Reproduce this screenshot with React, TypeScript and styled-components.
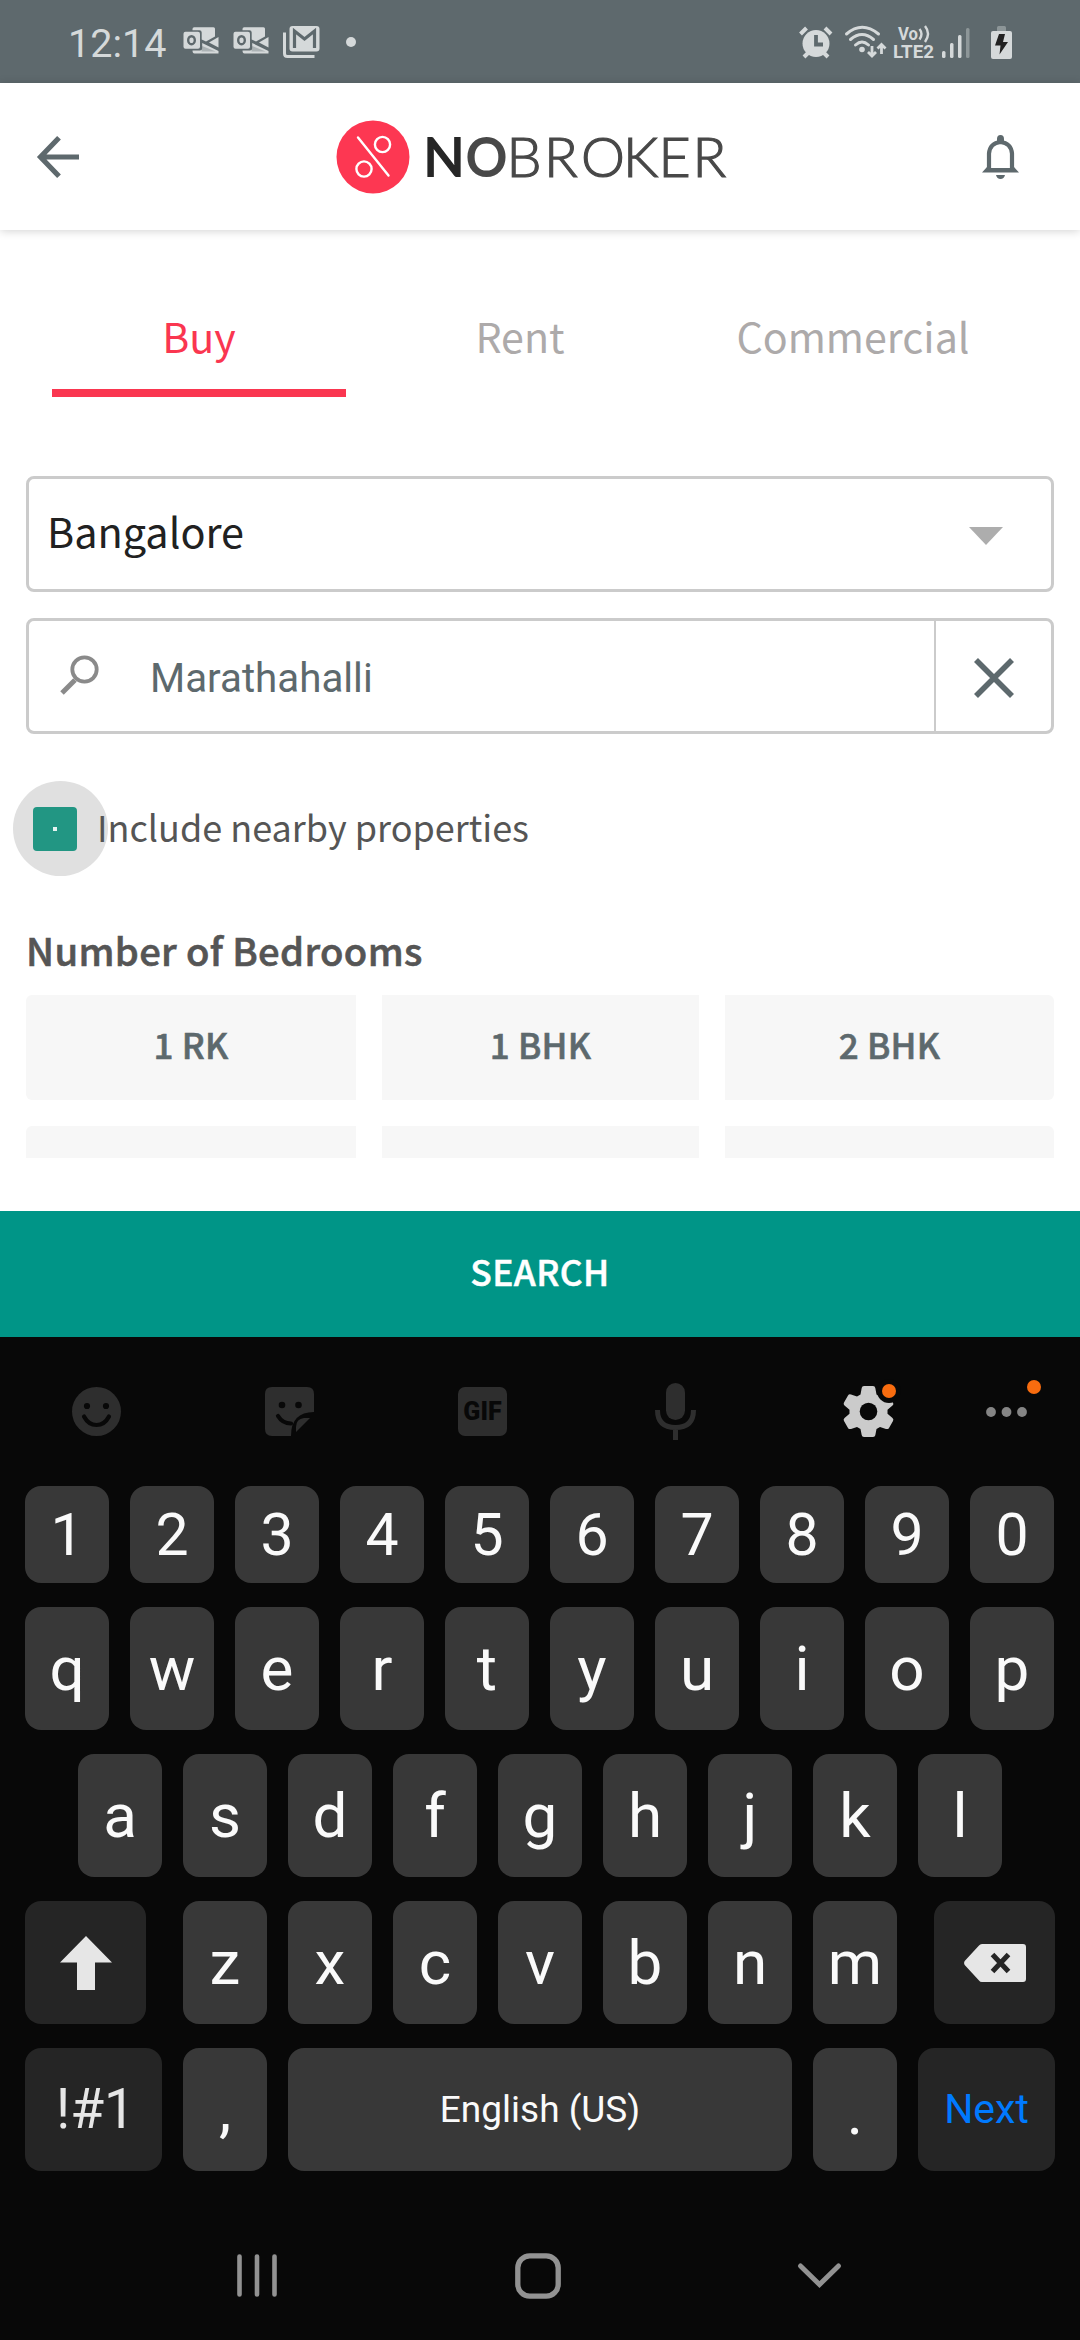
import React from "react";
import styled, { createGlobalStyle } from "styled-components";

const sans = `"Noto Sans CJK SC", "Noto Sans", sans-serif`;
const roboto = `Roboto, "Liberation Sans", sans-serif`;

const Global = createGlobalStyle`
  *, *::before, *::after { box-sizing: border-box; }
  body { margin: 0; background: #fff; }
  button { border: 0; padding: 0; margin: 0; background: none; font: inherit; color: inherit; }
  svg { display: block; flex: none; overflow: visible; }
`;

const Screen = styled.div`
  width: 1080px;
  height: 2340px;
  display: flex;
  flex-direction: column;
  overflow: hidden;
  background: #fff;
  font-family: ${sans};
`;

const StatusBar = styled.div`
  height: 83px;
  flex: none;
  display: flex;
  align-items: center;
  justify-content: space-between;
  padding: 0 67px 0 68px;
  background: #5e696d;
  color: #d5d9da;
  font-family: ${roboto};
`;
const StatusGroup = styled.div`
  display: flex;
  align-items: center;
`;
const Clock = styled.div`
  width: 115px;
  font-size: 39.5px;
  line-height: 46px;
  padding-top: 4px;
`;

const Header = styled.header`
  height: 147px;
  flex: none;
  display: flex;
  align-items: center;
  justify-content: space-between;
  padding: 0 61px 0 37px;
  background: #fff;
  box-shadow: 0 1px 9px rgba(0, 0, 0, 0.18);
`;
const Brand = styled.div`
  display: flex;
  align-items: center;
  padding-left: 3px;
`;
const Wordmark = styled.div`
  width: 304px;
  margin-left: 14px;
  display: flex;
  align-items: center;
`;

const Form = styled.main`
  height: 981px;
  flex: none;
  display: flex;
  flex-direction: column;
  padding: 0 26px;
`;

const Tabs = styled.nav`
  height: 167px;
  display: grid;
  grid-template-columns: 294px 348px 318px;
  padding: 0 26px;
`;
const Tab = styled.button<{ $active?: boolean }>`
  border-bottom: 8px solid ${(p) => (p.$active ? "#fa3650" : "transparent")};
  color: ${(p) => (p.$active ? "#fa3650" : "#adaaaa")};
  font-size: 41.2px;
  line-height: 60px;
  padding-top: 50px;
`;

const Field = styled.div`
  height: 116px;
  flex: none;
  display: flex;
  align-items: stretch;
  border: 3px solid #cbcbcb;
  border-radius: 8px;
`;
const CityField = styled(Field)`
  margin-top: 79px;
  padding: 0 48px 0 18px;
  align-items: center;
  justify-content: space-between;
`;
const CityName = styled.span`
  padding-bottom: 8px;
  color: #212121;
  font-size: 41.4px;
  line-height: 60px;
`;
const CityCaret = styled.svg`
  margin-top: 4px;
`;
const SearchField = styled(Field)`
  margin-top: 26px;
`;
const SearchEntry = styled.div`
  flex: 1;
  display: flex;
  align-items: center;
  padding-left: 31px;
  gap: 50px;
`;
const SearchText = styled.span`
  padding-top: 5px;
  color: #5d696d;
  font: 40.3px/48px ${roboto};
`;
const ClearButton = styled.button`
  width: 117px;
  display: flex;
  align-items: center;
  justify-content: center;
  padding-top: 4px;
  border-left: 2px solid #cbcbcb;
`;

const CheckRow = styled.label`
  position: relative;
  height: 95px;
  flex: none;
  margin-top: 47px;
  display: flex;
  align-items: center;
  gap: 20px;
  padding-left: 7px;
  color: #555;
  font-size: 36px;
  line-height: 52px;
  &::before {
    content: "";
    position: absolute;
    left: -13px;
    top: 0;
    width: 95px;
    height: 95px;
    border-radius: 50%;
    background: #e0e0e0;
  }
`;
const CheckBox = styled.span`
  position: relative;
  width: 44px;
  height: 44px;
  display: flex;
  align-items: center;
  justify-content: center;
  border-radius: 4px;
  background: #229683;
  &::after {
    content: "";
    width: 4px;
    height: 4px;
    background: #e6f3f1;
  }
`;
const CheckText = styled.span`
  position: relative;
  padding-bottom: 5px;
`;

const SectionTitle = styled.h2`
  margin: 46px 0 0;
  color: #555;
  font-size: 38.2px;
  line-height: 56px;
  font-weight: 500;
  letter-spacing: 0.35px;
  -webkit-text-stroke: 0.6px #555;
`;

const ChipGrid = styled.div`
  height: 163px;
  flex: none;
  margin-top: 17px;
  display: grid;
  grid-template-columns: 330px 317px 329px;
  grid-auto-rows: 105px;
  gap: 26px;
  overflow: hidden;
`;
const Chip = styled.button<{ $edge?: "left" | "right" }>`
  padding-bottom: 8px;
  border-radius: ${(p) => (p.$edge === "left" ? "6px 0 0 6px" : p.$edge === "right" ? "0 6px 6px 0" : "0")};
  background: #f7f7f7;
  color: #5d696d;
  font-size: 35px;
  line-height: 50px;
  font-weight: 500;
  letter-spacing: 0.2px;
  -webkit-text-stroke: 0.6px #5d696d;
`;

const SearchButton = styled.button`
  height: 126px;
  flex: none;
  padding-bottom: 7px;
  background: #009587;
  color: #fff;
  font-size: 35.4px;
  font-weight: 500;
  letter-spacing: 0.4px;
  -webkit-text-stroke: 0.5px #fff;
`;

const Keyboard = styled.section`
  flex: 1;
  display: flex;
  flex-direction: column;
  background: #080808;
  color: #fafafa;
  font-family: ${roboto};
`;
const Toolbar = styled.div`
  height: 149px;
  flex: none;
  display: grid;
  grid-template-columns: repeat(5, 193px) 83px;
  align-items: center;
  justify-items: center;
`;
const GifBadge = styled.div`
  width: 49px;
  height: 49px;
  border-radius: 7px;
  background: #2e2e2e;
  color: #080808;
  font-size: 25px;
  line-height: 50px;
  font-weight: 900;
  text-align: center;
`;
const Keys = styled.div`
  display: flex;
  flex-direction: column;
  gap: 24px;
`;
const KeyRow = styled.div<{ $short?: boolean; $inset?: number }>`
  height: ${(p) => (p.$short ? 97 : 123)}px;
  display: flex;
  gap: 21px;
  padding: 0 ${(p) => p.$inset ?? 25}px;
`;
const Key = styled.button<{ $w?: number; $fn?: boolean; $size?: number; $color?: string; $drop?: number; $ml?: number; $nudge?: number }>`
  width: ${(p) => p.$w ?? 84}px;
  flex: none;
  margin-left: ${(p) => p.$ml ?? 0}px;
  display: flex;
  align-items: center;
  justify-content: center;
  padding-top: ${(p) => p.$drop ?? 0}px;
  padding-left: ${(p) => p.$nudge ?? 0}px;
  border-radius: 16px;
  background: ${(p) => (p.$fn ? "#252525" : "#383838")};
  color: ${(p) => p.$color ?? "#fafafa"};
  font-size: ${(p) => p.$size ?? 62}px;
  line-height: 1;
`;

const NavBar = styled.div`
  flex: 1;
  display: grid;
  grid-template-columns: 281px 282px 281px;
  justify-content: center;
  justify-items: center;
  align-items: center;
  padding: 40px 4px 0 0;
`;

const OutlookIcon = () => (
  <svg width="50" height="27" viewBox="0 0 50 27" fill="#d5d9da">
    <g transform="translate(.5 -1.500)">
      <path d="M9 2.500Q9 .8 10.700 .8H30q1.500 0 1.500 1.500V10L22.500 15 18.200 13V6q0-2.300-2.300-2.300H9z" />
      <path d="M35 10.500v10.500l-9.500-5z" />
      <path d="M9 24h7.500q2.200 0 2.200-2.200V16.500L35 24.500V27H11q-2 0-2-3z" />
      <path d="M18.700 19.500l13.500 5.500H18z" fill="#5e696d" opacity=".35" />
      <rect x="0" y="5.300" width="16.500" height="17" rx="2" />
      <ellipse cx="8" cy="13.700" rx="3.300" ry="4" fill="none" stroke="#5e696d" strokeWidth="2.400" />
    </g>
  </svg>
);

const GmailStackIcon = () => (
  <svg width="37" height="32" viewBox="0 0 37 32">
    <rect x="6.500" y="0" width="30" height="25.500" rx="3" fill="#d5d9da" />
    <path d="M11.500 22V5L21.500 13 31.500 5V22" fill="none" stroke="#5e696d" strokeWidth="3.200" />
    <path d="M1.500 6.500v21q0 3 3 3H31.500" fill="none" stroke="#d5d9da" strokeWidth="3" />
  </svg>
);

const StatusIcons = () => (
  <svg width="214" height="34" viewBox="0 0 214 34" fill="#d5d9da">
    <circle cx="17" cy="18.500" r="13.500" />
    <path d="M17 10v9.500h7" fill="none" stroke="#5e696d" strokeWidth="3.800" />
    <path d="M1.500 9l6-6M32 9l-6-6M5 32l4-4M29 32l-4-4" stroke="#d5d9da" strokeWidth="4" />
    <g fill="none" stroke="#d5d9da" strokeWidth="3" strokeLinecap="round">
      <path d="M47.500 9q15.500-13.500 32 0M51.500 14.500q11.500-10 23 0M56.500 20q6.500-6 13 0" />
    </g>
    <circle cx="63" cy="24.500" r="2.800" />
    <path d="M73 21v10M69 27l4 4 4-4M82.500 29V19.500M78.500 23.500l4-4 4 4" fill="none" stroke="#d5d9da" strokeWidth="2.800" />
    <text x="99" y="14.500" fontSize="19" fontWeight="700" fontFamily="Roboto, sans-serif" textLength="20" lengthAdjust="spacingAndGlyphs">Vo</text>
    <path d="M120.500 4q4 5 0 10.500M126 1q6 7.500 0 16" fill="none" stroke="#d5d9da" strokeWidth="2.400" />
    <text x="94" y="33" fontSize="19" fontWeight="700" fontFamily="Roboto, sans-serif" textLength="41" lengthAdjust="spacingAndGlyphs">LTE2</text>
    <rect x="143" y="26" width="3.500" height="7" rx="1.500" />
    <rect x="151" y="18" width="3.500" height="15" rx="1.500" />
    <rect x="159" y="10" width="3.500" height="23" rx="1.500" />
    <rect x="167" y="3" width="3.500" height="30" rx="1.500" opacity=".4" />
    <rect x="198" y="1" width="9" height="6" rx="1.500" opacity=".4" />
    <rect x="192" y="6" width="21" height="28" rx="2" />
    <path d="M200 9h6l-2 8h5l-8.500 12.500 1-9h-5.500z" fill="#222" />
  </svg>
);

const BackIcon = () => (
  <svg width="42" height="42" viewBox="0 0 42 42" fill="none" stroke="#5e696d" strokeWidth="5.200">
    <path d="M42 21H4M22 1.800L3.500 21 22 40.200" />
  </svg>
);

const LogoMark = () => (
  <svg width="74" height="74" viewBox="0 0 74 74" fill="none" stroke="#fff" strokeWidth="2.400">
    <circle cx="37" cy="37" r="36.500" fill="#fd3752" stroke="none" />
    <path d="M22 17.500l30.500 38" strokeLinecap="round" />
    <circle cx="46.500" cy="24.500" r="7.600" />
    <circle cx="28" cy="49" r="7.600" />
  </svg>
);

const BrandText = () => (
  <svg width="304" height="74" viewBox="0 0 304 74" fontFamily="Lato, sans-serif" fontSize="55.500">
    <text x="-1" y="57" fontWeight="700" fill="#262626" textLength="42" lengthAdjust="spacingAndGlyphs">N</text>
    <text x="41.500" y="57" fontWeight="700" fill="#484848" textLength="42" lengthAdjust="spacingAndGlyphs">O</text>
    <text x="82.500 120 157 199 234.500 268.500" y="57" fontWeight="300" fill="#484848" stroke="#484848" strokeWidth="1.200">
      BROKER
    </text>
  </svg>
);

const BellIcon = () => (
  <svg width="37" height="44" viewBox="0 0 37 44">
    <path d="M7 36V18.500Q8 8 18.500 7 29 8 30 18.500V36" fill="none" stroke="#5e696d" strokeWidth="4.200" />
    <path d="M15 8V4q0-4 3.500-4T22 4v4zM0 37.500l5-5.500v1h27v-1l5 5.500zM14 40h9q-1 4-4.500 4T14 40z" fill="#5e696d" />
  </svg>
);

const SearchIcon = () => (
  <svg width="40" height="40" viewBox="0 0 40 40" fill="none" stroke="#8a8a8a">
    <circle cx="24.500" cy="13.500" r="12.200" strokeWidth="3.800" />
    <path d="M15 24L2 37" strokeWidth="5" />
  </svg>
);

const CloseIcon = () => (
  <svg width="38" height="38" viewBox="0 0 38 38" stroke="#5d696d" strokeWidth="5.600">
    <path d="M1 1l36 36M37 1L1 37" />
  </svg>
);

const SmileIcon = () => (
  <svg width="49" height="49" viewBox="0 0 49 49">
    <circle cx="24.500" cy="24.500" r="24.500" fill="#2e2e2e" />
    <circle cx="15" cy="19" r="3.100" fill="#080808" />
    <circle cx="34" cy="19" r="3.100" fill="#080808" />
    <path d="M12 29.500q4.500 8.500 12.500 8.500T37 29.500" fill="none" stroke="#080808" strokeWidth="4.200" strokeLinecap="round" />
  </svg>
);

const StickerIcon = () => (
  <svg width="49" height="49" viewBox="0 0 49 49">
    <path d="M7 0h35q7 0 7 7v18q-23 0-23 24H7q-7 0-7-7V7q0-7 7-7z" fill="#2e2e2e" />
    <circle cx="17" cy="18" r="3.300" fill="#080808" />
    <circle cx="33.500" cy="18" r="3.300" fill="#080808" />
    <path d="M13 29q4.500 7.500 13 7.500" fill="none" stroke="#080808" strokeWidth="4.200" strokeLinecap="round" />
    <path d="M31 45V40q0-8 8-9h6z" fill="#2e2e2e" />
  </svg>
);

const MicIcon = () => (
  <svg width="41" height="57" viewBox="0 0 41 57">
    <rect x="11" y="0" width="19" height="37" rx="9.500" fill="#2e2e2e" />
    <path d="M2.500 27q0 17.500 18 17.500t18-17.500M20.500 44v13" fill="none" stroke="#2e2e2e" strokeWidth="5" />
  </svg>
);

const GearIcon = () => (
  <svg width="49" height="51" viewBox="0 0 49 51">
    <path
      d="M20 0h9q2 0 2.300 2l1.200 6.500 3.500 2 6-2q2-.700 3 1l4 7q1 1.800-.500 3l-5 4.200v4l5 4.200q1.500 1.300.5 3l-4 7q-1 1.700-3 1l-6-2-3.500 2-1.200 6.300Q31 51 29 51h-9q-2 0-2.300-2l-1.200-6.100-3.500-2-6 2q-2 .7-3-1l-4-7q-1-1.700.5-3l5-4.200v-4l-5-4.200q-1.500-1.300-.5-3l4-7q1-1.700 3-1l6 2 3.500-2L17.700 2Q18 0 20 0z"
      fill="#cbcbcb"
    />
    <circle cx="24.500" cy="25.500" r="8.800" fill="#080808" />
    <circle cx="45" cy="5" r="12" fill="#080808" />
    <circle cx="45" cy="5" r="7" fill="#f86c0f" />
  </svg>
);

const MoreIcon = () => (
  <svg width="42" height="10" viewBox="0 0 42 10" fill="#858585">
    <circle cx="5" cy="5" r="4.900" />
    <circle cx="20.500" cy="5" r="4.900" />
    <circle cx="36" cy="5" r="4.900" />
    <circle cx="48" cy="-20" r="7" fill="#f86c0f" />
  </svg>
);

const ShiftIcon = () => (
  <svg width="52" height="54" viewBox="0 0 52 54">
    <path d="M26 0l26 26.500H35V54H17V26.500H0z" fill="#e6e6e6" />
  </svg>
);

const BackspaceIcon = () => (
  <svg width="62" height="38" viewBox="0 0 62 38">
    <path d="M18 0h41q3 0 3 3v32q0 3-3 3H18q-2 0-3-1.500L.7 21q-1.200-2 0-4L15 1.500Q16 0 18 0z" fill="#e6e6e6" />
    <path d="M28.500 10.500l16 17M44.500 10.500l-16 17" stroke="#252525" strokeWidth="5" />
  </svg>
);

const RecentsIcon = () => (
  <svg width="40" height="43" viewBox="0 0 40 43" stroke="#929292" strokeWidth="4.600" strokeLinecap="round">
    <path d="M2.500 2.500v38M20 2.500v38M37.500 2.500v38" />
  </svg>
);
const HomeIcon = () => (
  <svg width="46" height="46" viewBox="0 0 46 46">
    <rect x="2.800" y="2.800" width="40.400" height="40.400" rx="12" fill="none" stroke="#929292" strokeWidth="5.300" />
  </svg>
);
const HideIcon = () => (
  <svg width="43" height="25" viewBox="0 0 43 25">
    <path d="M2.500 3L21.500 21.500 40.500 3" fill="none" stroke="#929292" strokeWidth="5" strokeLinecap="round" />
  </svg>
);

const tabs = ["Buy", "Rent", "Commercial"];
const chips = ["1 RK", "1 BHK", "2 BHK", "3 BHK", "4 BHK", "4+ BHK"];
const edges = ["left", undefined, "right"] as const;

export default function App() {
  return (
    <Screen>
      <Global />
      <StatusBar>
        <StatusGroup>
          <Clock>12:14</Clock>
          <OutlookIcon />
          <OutlookIcon />
          <GmailStackIcon />
          <svg width="42" height="10" viewBox="0 0 42 10">
            <circle cx="31" cy="5" r="5" fill="#d5d9da" />
          </svg>
        </StatusGroup>
        <StatusIcons />
      </StatusBar>
      <Header>
        <BackIcon />
        <Brand>
          <LogoMark />
          <Wordmark>
            <BrandText />
          </Wordmark>
        </Brand>
        <BellIcon />
      </Header>
      <Form>
        <Tabs>
          {tabs.map((t, i) => (
            <Tab key={t} $active={i === 0}>
              {t}
            </Tab>
          ))}
        </Tabs>
        <CityField>
          <CityName>Bangalore</CityName>
          <CityCaret width="34" height="18" viewBox="0 0 34 18">
            <path d="M0 0h34L17 18z" fill="#adadad" />
          </CityCaret>
        </CityField>
        <SearchField>
          <SearchEntry>
            <SearchIcon />
            <SearchText>Marathahalli</SearchText>
          </SearchEntry>
          <ClearButton>
            <CloseIcon />
          </ClearButton>
        </SearchField>
        <CheckRow>
          <CheckBox />
          <CheckText>Include nearby properties</CheckText>
        </CheckRow>
        <SectionTitle>Number of Bedrooms</SectionTitle>
        <ChipGrid>
          {chips.map((c, i) => (
            <Chip key={c} $edge={edges[i % 3]}>
              {i < 3 ? c : null}
            </Chip>
          ))}
        </ChipGrid>
      </Form>
      <SearchButton>SEARCH</SearchButton>
      <Keyboard>
        <Toolbar>
          <SmileIcon />
          <StickerIcon />
          <GifBadge>GIF</GifBadge>
          <MicIcon />
          <GearIcon />
          <MoreIcon />
        </Toolbar>
        <Keys>
          <KeyRow $short>
            {[..."1234567890"].map((k) => (
              <Key key={k} $size={59}>
                {k}
              </Key>
            ))}
          </KeyRow>
          <KeyRow>
            {[..."qwertyuiop"].map((k) => (
              <Key key={k}>{k}</Key>
            ))}
          </KeyRow>
          <KeyRow $inset={78}>
            {[..."asdfghjkl"].map((k) => (
              <Key key={k}>{k}</Key>
            ))}
          </KeyRow>
          <KeyRow>
            <Key $w={121} $fn>
              <ShiftIcon />
            </Key>
            {[..."zxcvbnm"].map((k, i) => (
              <Key key={k} $ml={i === 0 ? 16 : 0}>
                {k}
              </Key>
            ))}
            <Key $w={121} $fn $ml={16}>
              <BackspaceIcon />
            </Key>
          </KeyRow>
          <KeyRow>
            <Key $w={137} $fn $size={55} $nudge={4} $color="#e6e6e6">
              !#1
            </Key>
            <Key>,</Key>
            <Key $w={504} $size={37}>
              English (US)
            </Key>
            <Key $drop={7}>.</Key>
            <Key $w={137} $fn $size={41} $color="#007aff">
              Next
            </Key>
          </KeyRow>
        </Keys>
        <NavBar>
          <RecentsIcon />
          <HomeIcon />
          <HideIcon />
        </NavBar>
      </Keyboard>
    </Screen>
  );
}
